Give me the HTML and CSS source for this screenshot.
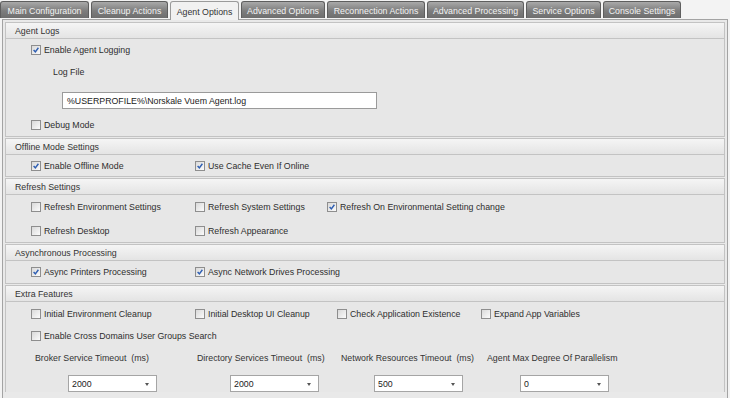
FILE: index.html
```html
<!DOCTYPE html>
<html>
<head>
<meta charset="utf-8">
<link rel="stylesheet" href="styles.css">
</head>
<body>
<div class="tabs">
  <div class="tab t1">Main Configuration</div>
  <div class="tab t2">Cleanup Actions</div>
  <div class="tab t3 active">Agent Options</div>
  <div class="tab t4">Advanced Options</div>
  <div class="tab t5">Reconnection Actions</div>
  <div class="tab t6">Advanced Processing</div>
  <div class="tab t7">Service Options</div>
  <div class="tab t8">Console Settings</div>
</div>
<div class="panel">
  <div class="section s-logs">
    <div class="head">Agent Logs</div>
    <div class="body">
      <div class="row"><label class="cb"><span class="box on"><svg viewBox="0 0 10 10"><path d="M2 5 L4.2 7.3 L8 2.2" /></svg></span>Enable Agent Logging</label></div>
      <div class="row logfile">Log File</div>
      <div class="input">%USERPROFILE%\Norskale Vuem Agent.log</div>
      <div class="row debug"><label class="cb"><span class="box"></span>Debug Mode</label></div>
    </div>
  </div>
  <div class="section">
    <div class="head">Offline Mode Settings</div>
    <div class="body grid g2">
      <div class="row short"><label class="cb"><span class="box on"><svg viewBox="0 0 10 10"><path d="M2 5 L4.2 7.3 L8 2.2" /></svg></span>Enable Offline Mode</label></div>
      <div class="row short"><label class="cb"><span class="box on"><svg viewBox="0 0 10 10"><path d="M2 5 L4.2 7.3 L8 2.2" /></svg></span>Use Cache Even If Online</label></div>
    </div>
  </div>
  <div class="section">
    <div class="head">Refresh Settings</div>
    <div class="body grid g3">
      <div class="row tall"><label class="cb"><span class="box"></span>Refresh Environment Settings</label></div>
      <div class="row tall"><label class="cb"><span class="box"></span>Refresh System Settings</label></div>
      <div class="row tall"><label class="cb"><span class="box on"><svg viewBox="0 0 10 10"><path d="M2 5 L4.2 7.3 L8 2.2" /></svg></span>Refresh On Environmental Setting change</label></div>
      <div class="row mid"><label class="cb"><span class="box"></span>Refresh Desktop</label></div>
      <div class="row mid"><label class="cb"><span class="box"></span>Refresh Appearance</label></div>
    </div>
  </div>
  <div class="section">
    <div class="head">Asynchronous Processing</div>
    <div class="body grid g2">
      <div class="row"><label class="cb"><span class="box on"><svg viewBox="0 0 10 10"><path d="M2 5 L4.2 7.3 L8 2.2" /></svg></span>Async Printers Processing</label></div>
      <div class="row"><label class="cb"><span class="box on"><svg viewBox="0 0 10 10"><path d="M2 5 L4.2 7.3 L8 2.2" /></svg></span>Async Network Drives Processing</label></div>
    </div>
  </div>
  <div class="section last">
    <div class="head">Extra Features</div>
    <div class="body extra">
      <div class="grid g4">
        <div class="row"><label class="cb"><span class="box"></span>Initial Environment Cleanup</label></div>
        <div class="row"><label class="cb"><span class="box"></span>Initial Desktop UI Cleanup</label></div>
        <div class="row"><label class="cb"><span class="box"></span>Check Application Existence</label></div>
        <div class="row"><label class="cb"><span class="box"></span>Expand App Variables</label></div>
        <div class="row span"><label class="cb"><span class="box"></span>Enable Cross Domains User Groups Search</label></div>
      </div>
      <div class="fields">
        <div class="field f1"><div class="flabel">Broker Service Timeout&nbsp; (ms)</div><div class="select">2000<span class="arrow"></span></div></div>
        <div class="field f2"><div class="flabel">Directory Services Timeout&nbsp; (ms)</div><div class="select">2000<span class="arrow"></span></div></div>
        <div class="field f3"><div class="flabel">Network Resources Timeout&nbsp; (ms)</div><div class="select">500<span class="arrow"></span></div></div>
        <div class="field f4"><div class="flabel">Agent Max Degree Of Parallelism</div><div class="select">0<span class="arrow"></span></div></div>
      </div>
    </div>
  </div>
</div>
</body>
</html>
```

FILE: styles.css
```css
* { box-sizing: border-box; }
html, body { margin: 0; padding: 0; }
body {
  width: 730px;
  height: 398px;
  overflow: hidden;
  background: #f3f3f3;
  font-family: "Liberation Sans", Arial, sans-serif;
  font-size: 8.8px;
  color: #2e2e2e;
}
.tabs {
  display: flex;
  gap: 2px;
  height: 19px;
  align-items: flex-end;
  position: relative;
  z-index: 2;
}
.tab {
  height: 17px;
  margin-bottom: 1px;
  border: 1px solid #5e5e5e;
  border-bottom: none;
  border-radius: 3px 3px 0 0;
  background: linear-gradient(#a9a9a9, #7d7d7d 55%, #6e6e6e);
  color: #f2f2f2;
  display: flex;
  align-items: center;
  justify-content: center;
  white-space: nowrap;
  padding-top: 1px;
}
.tab.active {
  height: 19px;
  margin-bottom: -1px;
  background: #f1f1f1;
  color: #333;
  border-color: #9a9a9a;
}
.t1 { width: 89px; }
.t2 { width: 77px; }
.t3 { width: 69px; }
.t4 { width: 84px; }
.t5 { width: 98px; }
.t6 { width: 97px; }
.t7 { width: 75px; }
.t8 { width: 78px; }
.panel {
  margin-left: 2px;
  width: 726px;
  height: 382px;
  border: 1px solid #a3a3a3;
  border-bottom: none;
  background: #e9e9e9;
  padding: 2px 2px 0 2px;
}
.section {
  border: 1px solid #c3c3c3;
  background: #e7e7e7;
  margin-bottom: 1px;
}
.section.last { border-bottom: none; }
.head {
  height: 16px;
  border-bottom: 1px solid #c3c3c3;
  background: linear-gradient(#f5f5f5, #e4e4e4);
  padding-left: 9px;
  display: flex;
  align-items: center;
  color: #333;
}
.body { padding-left: 25px; }
.extra { padding-top: 1px; }
.row {
  height: 22px;
  display: flex;
  align-items: center;
}
.row.short { height: 21px; }
.row.tall { height: 24px; }
.row.mid { height: 23px; }
.cb {
  display: flex;
  align-items: center;
  white-space: nowrap;
}
.box {
  width: 10px;
  height: 10px;
  border: 1px solid #8e8e8e;
  background: linear-gradient(135deg, #d9d9d9, #fbfbfb);
  margin-right: 3px;
  display: flex;
}
.box svg { width: 8px; height: 8px; }
.box path { fill: none; stroke: #2f5fb3; stroke-width: 1.8; }
.logfile { padding-left: 22px; }
.input {
  margin-top: 9px;
  margin-left: 31px;
  width: 315px;
  height: 17px;
  border: 1px solid #9a9a9a;
  background: #fff;
  padding-left: 4px;
  display: flex;
  align-items: center;
  color: #222;
}
.debug { margin-top: 5px; }
.grid { display: grid; }
.g2 { grid-template-columns: 164px auto; }
.g3 { grid-template-columns: 164px 132px auto; }
.g4 { grid-template-columns: 164px 142px 144px auto; }
.span { grid-column: 1 / -1; }
.fields {
  display: flex;
  padding-left: 4px;
}
.f1 { width: 162px; }
.f2 { width: 144px; }
.f3 { width: 146px; }
.f4 { width: 140px; }
.flabel {
  height: 22px;
  display: flex;
  align-items: center;
  white-space: nowrap;
  color: #333;
}
.select {
  position: relative;
  margin-top: 6px;
  margin-left: 33px;
  width: 89px;
  height: 17px;
  border: 1px solid #a5a5a5;
  background: #fff;
  padding-left: 3px;
  display: flex;
  align-items: center;
  color: #222;
}
.arrow {
  position: absolute;
  right: 7px;
  top: 7px;
  width: 0;
  height: 0;
  border-left: 2.5px solid transparent;
  border-right: 2.5px solid transparent;
  border-top: 3px solid #555;
}
```
